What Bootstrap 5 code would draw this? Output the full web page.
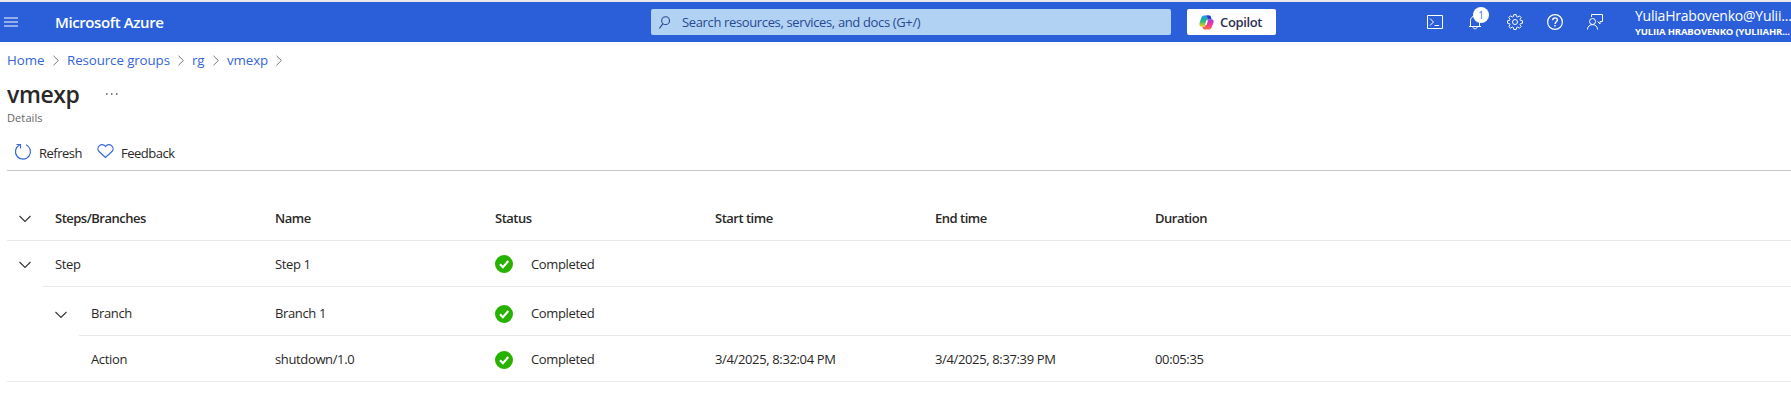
<!DOCTYPE html>
<html lang="en">
<head>
<meta charset="utf-8">
<meta name="viewport" content="width=device-width, initial-scale=1">
<title>vmexp - Microsoft Azure</title>
<link rel="stylesheet" href="https://cdn.jsdelivr.net/npm/bootstrap@5.3.0/dist/css/bootstrap.min.css">
<style>
  body { font-family: "Open Sans", "Noto Sans", sans-serif; font-size: 13px; line-height: 20px; color: #292827; background: #fff; overflow: hidden; letter-spacing: -.36px; }
  svg { display: block; flex: none; fill: none; }
  .topbar { height: 42px; background: #2b5fd9; border-top: 2px solid #e9e9ec; color: #fff; }
  .menu-icon { margin-left: 4px; }
  .brand-name { font-size: 15px; font-weight: 600; margin-left: 37px; width: 596px; letter-spacing: -.4px; }
  .search-box { width: 520px; height: 26px; background: #b2d2f4; border-radius: 2px; color: #27498f; padding-left: 8px; gap: 12px; }
  .copilot { width: 89px; height: 26px; margin-left: 16px; padding-left: 12px; background: #fff; border-radius: 2px; color: #2c2f55; font-weight: 600; gap: 6px; }
  .top-icons { margin-left: 151px; gap: 24px; }
  .top-icons svg { stroke: #fff; }
  .notice { top: -7px; left: 6px; width: 16px; height: 16px; border-radius: 50%; background: #fff; color: #4870dc; font-size: 10px; line-height: 16px; letter-spacing: 0; }
  .account { margin-left: 32px; width: 156px; line-height: 16px; white-space: nowrap; padding-top: 3px; }
  .account-mail { font-size: 14px; letter-spacing: -.22px; }
  .account-dir { font-size: 9.5px; font-weight: 700; line-height: 15px; letter-spacing: -.16px; }
  .crumbs { height: 36px; padding-left: 7px; font-size: 13.33px; letter-spacing: -.1px; color: #3565d8; }
  .crumbs a { color: inherit; text-decoration: none; }
  .page-title { font-size: 23px; line-height: 32px; font-weight: 600; letter-spacing: -.4px; width: 99px; }
  .details { font-size: 11px; line-height: 16px; color: #666; letter-spacing: .1px; }
  .page-head { padding-left: 7px; }
  .tools { height: 45px; margin-left: 7px; border-bottom: 1px solid #c8c8c8; padding: 17px 0 0 7px; letter-spacing: -.5px; }
  .tools span { line-height: 20px; }
  .steps { margin: 26px 0 0 7px; }
  .step-row { display: grid; grid-template-columns: 48px repeat(5, 220px) 1fr; align-items: center; border-bottom: 1px solid #eaeaea; height: 46px; }
  .step-row.head { height: 44px; font-weight: 600; letter-spacing: -.5px; padding-bottom: 2px; }
  .step-row.level-1 { margin-left: 36px; grid-template-columns: 12px repeat(5, 220px) 1fr; }
  .step-row.level-2 { margin-left: 72px; height: 49px; grid-template-columns: 12px 184px repeat(4, 220px) 1fr; padding-top: 4px; }
  .head-toggle { margin: 2px 0 0 12px; }
  .outdent { margin: 3px 0 0 -24px; }
  .step-row.action { grid-template-columns: 84px 184px repeat(4, 220px) 1fr; }
  .level-2 .state svg, .action .state svg { margin-top: 2px; }
  .state { gap: 18px; }
</style>
</head>
<body>
<svg width="0" height="0" class="position-absolute">
  <defs>
    <symbol id="down" viewBox="0 0 12 8"><path d="M.5 1l5.500 5.500L11.500 1" stroke="#333" stroke-width="1.100"/></symbol>
    <symbol id="next" viewBox="0 0 6 11"><path d="M.5.8L5.400 5.500.5 10.200" stroke="#777"/></symbol>
    <symbol id="done" viewBox="0 0 18 18"><circle cx="9" cy="9" r="9" fill="#27b200"/><path d="M5 9.300l2.900 2.900L13.300 6" stroke="#fff" stroke-width="2.100"/></symbol>
    <linearGradient id="cool" x1="0" y1="0" x2="0" y2="1"><stop offset="0" stop-color="#1c9bea"/><stop offset=".5" stop-color="#22b980"/><stop offset="1" stop-color="#f4d513"/></linearGradient>
    <linearGradient id="warm" x1="0" y1="0" x2="0" y2="1"><stop offset="0" stop-color="#a43be5"/><stop offset=".5" stop-color="#f1379a"/><stop offset="1" stop-color="#ff6c43"/></linearGradient>
  </defs>
</svg>

<header class="topbar d-flex align-items-center">
  <svg class="menu-icon" width="14" height="10" viewBox="0 0 14 10"><path d="M0 1h14M0 5h14M0 9h14" stroke="#94aeec" stroke-width="2"/></svg>
  <div class="brand-name">Microsoft Azure</div>
  <div class="search-box d-flex align-items-center">
    <svg width="11" height="13" viewBox="0 0 10 12" stroke="#27498f"><circle cx="6" cy="4.300" r="3.600"/><path d="M3.600 7L.3 11.500"/></svg>
    <span>Search resources, services, and docs (G+/)</span>
  </div>
  <div class="copilot d-flex align-items-center">
    <svg width="15" height="15" viewBox="0 0 15 15">
      <path d="M5 .6h5.200c1 0 1.400.8 1.700 1.800l.6 1.900H9.800c-1 0-1.500.7-1.800 1.600l-1.300 4.300c-.3 1-.8 1.500-1.800 1.500H2.700C.6 11.700 0 10 .6 8L2.200 3C2.700 1.500 3.500.6 5 .6z" fill="url(#cool)"/>
      <path d="M6.500.6h3.700c1 0 1.400.8 1.700 1.800l.6 1.900H9.800L8.700 3C8.300 1.500 7.700.6 6.500.6z" fill="#3930d0"/>
      <path d="M10 14.400H5.400c-1 0-1.500-.8-1.800-1.800l-.3-.9h1.600c1 0 1.500-.5 1.800-1.500L8 5.900c.3-.9.800-1.600 1.800-1.600h2.500c2.100 0 2.700 1.700 2.100 3.700L12.800 12c-.5 1.500-1.300 2.400-2.800 2.400z" fill="url(#warm)"/>
      <path d="M8.300 5.300L6.700 10" stroke="#fff" stroke-width="1.500"/>
    </svg>
    <span>Copilot</span>
  </div>
  <div class="top-icons d-flex align-items-center">
    <svg width="16" height="16" viewBox="0 0 16 16"><path d="M.5 1.500h15v13H.5zM3 4.500L6.500 8 3 11.500M7.500 11.500H12"/></svg>
    <div class="position-relative">
      <svg width="16" height="16" viewBox="0 0 16 16"><path d="M3.500 12.500V6.500a4.500 4.500 0 0 1 9 0v6M2 12.500h12M6 13c0 2.400 4 2.400 4 0"/></svg>
      <span class="notice position-absolute text-center">1</span>
    </div>
    <svg width="16" height="16" viewBox="0 0 16 16"><circle cx="8" cy="8" r="2.500"/><path d="M6.800.6h2.400l.4 2 1.100.5 1.800-1.200 1.700 1.700L13 5.300l.5 1.100 2 .4v2.400l-2 .4-.5 1.100 1.200 1.800-1.700 1.700-1.800-1.200-1.100.5-.4 2H6.800l-.4-2-1.100-.5-1.800 1.200-1.700-1.700L3 10.700l-.5-1.100-2-.4V6.800l2-.4L3 5.300 1.800 3.500l1.700-1.700L5.300 3l1.100-.5z"/></svg>
    <svg width="16" height="16" viewBox="0 0 16 16"><circle cx="8" cy="8" r="7.400" stroke-width="1.200"/><path d="M5.700 6.300c0-3.200 4.700-3.100 4.700-.3C10.400 7.600 8 7.900 8 10M8 11v1.500" stroke-width="1.400"/></svg>
    <svg width="16" height="16" viewBox="0 0 16 16"><circle cx="5.500" cy="7.500" r="3"/><path d="M.5 15.500c0-6.500 10-6.500 10 0M4.500 3V.5h11v7H13v2.500L10.500 7.500"/></svg>
  </div>
  <div class="account">
    <div class="account-mail">YuliaHrabovenko@Yulii...</div>
    <div class="account-dir">YULIIA HRABOVENKO (YULIIAHR...</div>
  </div>
</header>

<nav class="crumbs d-flex align-items-center" aria-label="Breadcrumb">
  <a href="#" style="width:46px">Home</a><svg width="6" height="11"><use href="#next"/></svg>
  <a href="#" style="width:111px;margin-left:8px" class="text-nowrap">Resource groups</a><svg width="6" height="11"><use href="#next"/></svg>
  <a href="#" style="width:21px;margin-left:8px">rg</a><svg width="6" height="11"><use href="#next"/></svg>
  <a href="#" style="width:49px;margin-left:8px">vmexp</a><svg width="6" height="11"><use href="#next"/></svg>
</nav>

<main>
  <div class="page-head">
    <div class="d-flex">
      <h1 class="page-title mb-0">vmexp</h1>
      <svg width="12" height="2" style="margin-top:15px" viewBox="0 0 12 2"><path d="M0 1h1.500M5 1h1.500M10 1h1.500" stroke="#555" stroke-width="1.500"/></svg>
    </div>
    <div class="details">Details</div>
  </div>
  <div class="tools d-flex">
    <svg width="18" height="18" viewBox="0 0 18 18" stroke="#3a68dc" stroke-width="1.200"><path d="M12 1.800a7.500 7.500 0 1 1-6.500.2M2.500 1.500h4v4"/></svg>
    <span style="margin-left:7px;width:58px">Refresh</span>
    <svg width="17" height="16" viewBox="0 0 17 16" stroke="#3a68dc" stroke-width="1.200"><path d="M8.500 14.500L1.800 8.300C-1.300 4.500 4.500-1.500 8.500 3.500c4-5 9.800 1 6.700 4.800z"/></svg>
    <span style="margin-left:7px">Feedback</span>
  </div>

  <section class="steps">
    <div class="step-row head">
      <svg width="12" height="8" class="head-toggle"><use href="#down"/></svg>
      <div>Steps/Branches</div><div>Name</div><div>Status</div><div>Start time</div><div>End time</div><div>Duration</div>
    </div>
    <div class="step-row level-1">
      <svg width="12" height="8" class="outdent"><use href="#down"/></svg>
      <div>Step</div><div>Step 1</div><div class="state d-flex align-items-center"><svg width="18" height="18"><use href="#done"/></svg>Completed</div>
    </div>
    <div class="step-row level-2">
      <svg width="12" height="8" class="outdent"><use href="#down"/></svg>
      <div>Branch</div><div>Branch 1</div><div class="state d-flex align-items-center"><svg width="18" height="18"><use href="#done"/></svg>Completed</div>
    </div>
    <div class="step-row action">
      <span></span>
      <div>Action</div><div>shutdown/1.0</div><div class="state d-flex align-items-center"><svg width="18" height="18"><use href="#done"/></svg>Completed</div>
      <div>3/4/2025, 8:32:04 PM</div><div>3/4/2025, 8:37:39 PM</div><div>00:05:35</div>
    </div>
  </section>
</main>
<script src="https://cdn.jsdelivr.net/npm/bootstrap@5.3.0/dist/js/bootstrap.bundle.min.js"></script>
</body>
</html>
